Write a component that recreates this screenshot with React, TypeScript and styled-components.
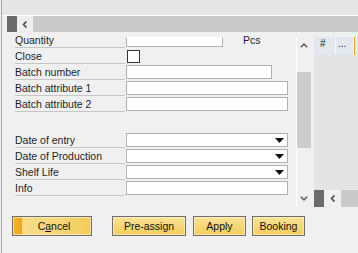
import React from "react";
import styled, { createGlobalStyle } from "styled-components";

const GlobalStyle = createGlobalStyle`
  html, body { margin: 0; padding: 0; background: #f0f0f0; }
  body { font-family: "Liberation Sans", Arial, sans-serif; }
  * { box-sizing: border-box; }
`;

const Root = styled.div`
  width: 358px;
  height: 253px;
  overflow: hidden;
  background: #f0f0f0;
  padding-left: 1px;
`;

const Frame = styled.div`
  height: 100%;
  border-left: 1px solid #a9a9a9;
  display: flex;
  flex-direction: column;
`;

const TopBand = styled.div`
  height: 16px;
  background: #e6e6e6;
  border-bottom: 1px solid #ffffff;
`;

const Toolbar = styled.div`
  height: 16px;
  display: flex;
  padding-left: 5px;
`;

const DarkTab = styled.div`
  width: 10px;
  background: #6b6b6b;
`;

const NavButton = styled.div`
  width: 16px;
  background: #efefef;
  display: flex;
  align-items: center;
  justify-content: center;
`;

const BarFill = styled.div`
  flex: 1;
  background: #cacaca;
`;

const Main = styled.div`
  height: 175px;
  display: flex;
`;

const FormPane = styled.div`
  width: 294px;
  padding-left: 13px;
  display: flex;
  flex-direction: column;
`;

const Row = styled.div`
  height: 16px;
  display: flex;
  align-items: flex-start;
`;

const Label = styled.div`
  width: 110px;
  height: 16px;
  margin-right: 1px;
  padding-top: 2px;
  border-bottom: 1px solid #c6c6c6;
  font-size: 10.5px;
  line-height: 13px;
  color: #1a1e2c;
  white-space: nowrap;
`;

const Field = styled.div<{ $w: number; $clipped?: boolean }>`
  width: ${(p) => p.$w}px;
  height: ${(p) => (p.$clipped ? 10 : 14)}px;
  margin-top: ${(p) => (p.$clipped ? 5 : 1)}px;
  background: #ffffff;
  border: 1px solid #b2b2b2;
  border-top-color: ${(p) => (p.$clipped ? "#ffffff" : "#b2b2b2")};
  display: flex;
  align-items: center;
  justify-content: flex-end;
  padding-right: 3px;
`;

const Unit = styled.div`
  margin-left: 20px;
  padding-top: 2px;
  font-size: 10.5px;
  line-height: 13px;
  color: #1a1e2c;
`;

const CheckBox = styled.div`
  width: 13px;
  height: 13px;
  margin-top: 2px;
  margin-left: 1px;
  background: #ffffff;
  border: 1px solid #333333;
`;

const Spacer = styled.div`
  height: 20px;
`;

const SidePane = styled.div`
  width: 62px;
  margin-top: 5px;
  height: 170px;
  display: flex;
  border-left: 1px solid #ffffff;
`;

const VScroll = styled.div`
  width: 15px;
  display: flex;
  flex-direction: column;
  background: #f0f0f0;
`;

const ScrollBtn = styled.div`
  height: 17px;
  display: flex;
  justify-content: center;
  align-items: center;
`;

const Track = styled.div`
  flex: 1;
  padding-top: 18px;
`;

const Thumb = styled.div`
  height: 76px;
  background: #cdcdcd;
`;

const Gap = styled.div`
  width: 3px;
`;

const Grid = styled.div`
  flex: 1;
  display: flex;
  flex-direction: column;
`;

const Header = styled.div`
  height: 18px;
  display: flex;
  gap: 1px;
  background: #f4f4f4;
`;

const HeadCell = styled.div<{ $w: number; $accent?: boolean }>`
  width: ${(p) => p.$w}px;
  flex-shrink: 0;
  background: #e3e8ee;
  border-left: ${(p) => (p.$accent ? "1px solid #e8a21c" : "none")};
  font-size: 10px;
  line-height: 14px;
  padding-left: ${(p) => (p.$w > 18 ? 6 : 2)}px;
  color: #1a1e2c;
  white-space: nowrap;
  overflow: hidden;
`;

const GridBody = styled.div`
  flex: 1;
  background: #e4e4e4;
`;

const HScroll = styled.div`
  height: 17px;
  display: flex;
`;

const HBtn = styled.div`
  width: 17px;
  background: #f0f0f0;
  display: flex;
  align-items: center;
  justify-content: center;
`;

const ButtonRow = styled.div`
  display: flex;
  padding-left: 10px;
  margin-top: 9px;
`;

const Button = styled.div<{ $w: number; $ml?: number; $default?: boolean }>`
  width: ${(p) => p.$w}px;
  height: 20px;
  margin-left: ${(p) => p.$ml ?? 0}px;
  border: 1px solid #6e6e6e;
  background: ${(p) =>
    p.$default
      ? "linear-gradient(to right, #f5b22c 0, #f3a51c 9px, #f8dc8a 9px, #f6d676 60%, #f2cc58 100%)"
      : "linear-gradient(to bottom, #f9e29a 0%, #f6d878 50%, #f2cd5a 100%)"};
  box-shadow: inset 0 0 0 1px rgba(255, 245, 210, 0.6);
  display: flex;
  align-items: center;
  justify-content: center;
  font-size: 10.5px;
  color: #111111;
  padding-left: ${(p) => (p.$default ? 4 : 0)}px;
`;

const Mnemonic = styled.span`
  text-decoration: underline;
`;

const ChevronLeft = () => (
  <svg width="6" height="7" viewBox="0 0 6 7">
    <polyline points="4.5,0.5 1.5,3.5 4.5,6.5" fill="none" stroke="#4a4a4a" strokeWidth="1.6" />
  </svg>
);

const ChevronUp = () => (
  <svg width="8" height="5" viewBox="0 0 8 5">
    <polyline points="0.8,4.3 4,1.2 7.2,4.3" fill="none" stroke="#606060" strokeWidth="1.6" />
  </svg>
);

const ChevronDown = () => (
  <svg width="8" height="5" viewBox="0 0 8 5">
    <polyline points="0.8,0.7 4,3.8 7.2,0.7" fill="none" stroke="#606060" strokeWidth="1.6" />
  </svg>
);

const DropArrow = () => (
  <svg width="9" height="5" viewBox="0 0 9 5">
    <polygon points="0,0 9,0 4.5,5" fill="#111111" />
  </svg>
);

type FieldRow = { label: string; width: number; dropdown?: boolean };

const upper: FieldRow[] = [
  { label: "Batch number", width: 146 },
  { label: "Batch attribute 1", width: 162 },
  { label: "Batch attribute 2", width: 162 },
];

const lower: FieldRow[] = [
  { label: "Date of entry", width: 162, dropdown: true },
  { label: "Date of Production", width: 162, dropdown: true },
  { label: "Shelf Life", width: 162, dropdown: true },
  { label: "Info", width: 162 },
];

const renderRow = (r: FieldRow) => (
  <Row key={r.label}>
    <Label>{r.label}</Label>
    <Field $w={r.width}>{r.dropdown && <DropArrow />}</Field>
  </Row>
);

export default function App() {
  return (
    <>
      <GlobalStyle />
      <Root>
        <Frame>
          <TopBand />
          <Toolbar>
            <DarkTab />
            <NavButton>
              <ChevronLeft />
            </NavButton>
            <BarFill />
          </Toolbar>
          <Main>
            <FormPane>
              <Row>
                <Label>Quantity</Label>
                <Field $w={97} $clipped />
                <Unit>Pcs</Unit>
              </Row>
              <Row>
                <Label>Close</Label>
                <CheckBox />
              </Row>
              {upper.map(renderRow)}
              <Spacer />
              {lower.map(renderRow)}
            </FormPane>
            <SidePane>
              <VScroll>
                <ScrollBtn>
                  <ChevronUp />
                </ScrollBtn>
                <Track>
                  <Thumb />
                </Track>
                <ScrollBtn>
                  <ChevronDown />
                </ScrollBtn>
              </VScroll>
              <Gap />
              <Grid>
                <Header>
                  <HeadCell $w={21}>#</HeadCell>
                  <HeadCell $w={17}>...</HeadCell>
                  <HeadCell $w={4} $accent />
                </Header>
                <GridBody />
                <HScroll>
                  <DarkTab />
                  <HBtn>
                    <ChevronLeft />
                  </HBtn>
                  <BarFill />
                </HScroll>
              </Grid>
            </SidePane>
          </Main>
          <ButtonRow>
            <Button $w={80} $default>
              C<Mnemonic>a</Mnemonic>ncel
            </Button>
            <Button $w={74} $ml={20}>Pre-assign</Button>
            <Button $w={53} $ml={7}>Apply</Button>
            <Button $w={53} $ml={6}>Booking</Button>
          </ButtonRow>
        </Frame>
      </Root>
    </>
  );
}
